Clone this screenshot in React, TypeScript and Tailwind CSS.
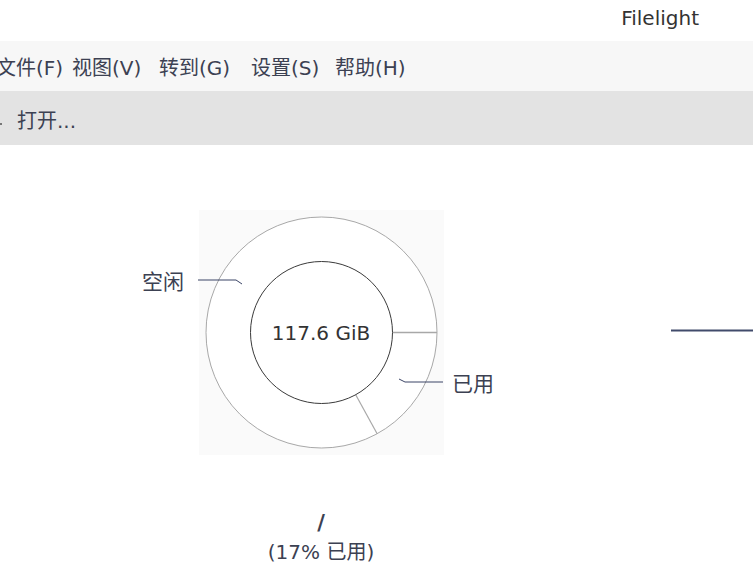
import React from "react";

const FONT = {
  fontFamily: '"DejaVu Sans", "Noto Sans CJK SC", sans-serif',
};

export default function App() {
  const cx = 321.5;
  const cy = 187.5;
  const ro = 115.5;
  const ri = 71;
  const a = (61.2 * Math.PI) / 180;
  const ix = cx + ri * Math.cos(a);
  const iy = cy + ri * Math.sin(a);
  const ox = cx + ro * Math.cos(a);
  const oy = cy + ro * Math.sin(a);

  return (
    <div
      className="w-[753px] h-[575px] overflow-hidden bg-white flex flex-col text-[#3c4152]"
      style={FONT}
    >
      {/* Title bar */}
      <div className="h-[41px] flex items-center justify-end pr-[54px] shrink-0">
        <span className="text-[20px] text-[#333333] leading-none mt-[-6px]">
          Filelight
        </span>
      </div>

      {/* Menu bar */}
      <div className="h-[50px] bg-[#f7f7f7] flex items-center shrink-0 text-[20px] leading-none pt-[3px]">
        <span className="w-[76px] ml-[-4px] shrink-0 whitespace-nowrap">文件(F)</span>
        <span className="w-[87px] shrink-0 whitespace-nowrap">视图(V)</span>
        <span className="w-[92px] shrink-0 whitespace-nowrap">转到(G)</span>
        <span className="w-[84px] shrink-0 whitespace-nowrap">设置(S)</span>
        <span className="shrink-0 whitespace-nowrap">帮助(H)</span>
      </div>

      {/* Toolbar */}
      <div className="h-[54px] bg-[#e3e3e3] flex items-center shrink-0 text-[20px] leading-none pt-[5px]">
        <span className="w-[2px] h-[2px] bg-[#777] mt-[6px] shrink-0"></span>
        <span className="ml-[15px]">打开...</span>
      </div>

      {/* Canvas */}
      <div className="relative flex-1">
        <div className="absolute left-[199px] top-[65px] w-[245px] h-[245px] bg-[#fafafa]"></div>
        <svg
          className="absolute left-0 top-0"
          width="753"
          height="430"
          viewBox="0 0 753 430"
        >
          <circle cx={cx} cy={cy} r={ro} fill="#ffffff" stroke="#a8a8a8" strokeWidth="1" />
          <line x1={cx + ri} y1={cy} x2={cx + ro} y2={cy} stroke="#a8a8a8" strokeWidth="1.5" />
          <line x1={ix} y1={iy} x2={ox} y2={oy} stroke="#a8a8a8" strokeWidth="1.2" />
          <circle cx={cx} cy={cy} r={ri} fill="#ffffff" stroke="#3a3a3a" strokeWidth="1" />
          <polyline
            points="198,135 236,135 242,139"
            fill="none"
            stroke="#3b4466"
            strokeWidth="1"
          />
          <polyline
            points="399,234 405,237 443,237"
            fill="none"
            stroke="#3b4466"
            strokeWidth="1"
          />
          <line x1="671" y1="185.5" x2="753" y2="185.5" stroke="#414b6b" strokeWidth="2" />
        </svg>

        <div className="absolute left-[142px] top-[125px] text-[21px] leading-[24px]">
          空闲
        </div>
        <div className="absolute left-[452px] top-[227px] text-[21px] leading-[24px]">
          已用
        </div>
        <div className="absolute left-[221px] w-[200px] top-[176px] text-center text-[20px] leading-[24px] text-[#333333]">
          117.6 GiB
        </div>
        <div className="absolute left-[221px] w-[200px] top-[365px] flex flex-col items-center leading-none">
          <span className="text-[21px] font-bold text-[#3c4152] leading-[26px]">/</span>
          <span className="text-[20px] leading-[32px]">(17% 已用)</span>
        </div>
      </div>
    </div>
  );
}
